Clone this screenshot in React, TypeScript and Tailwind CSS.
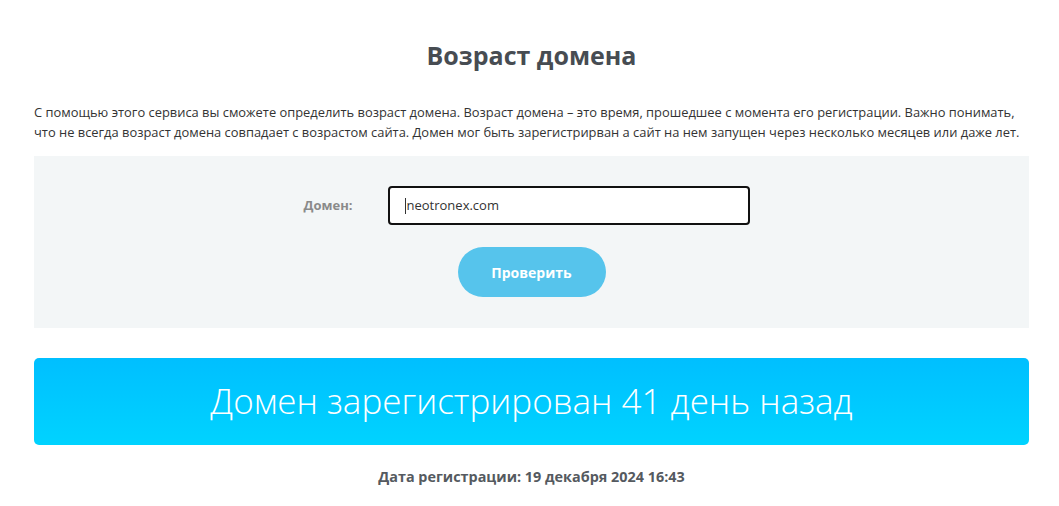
import React from "react";

export default function App() {
  return (
    <div className="min-h-[506px] bg-white pl-[34px] pr-[30px] pt-[38px] text-[#333]" style={{ fontFamily: '"Open Sans", "Noto Sans", sans-serif' }}>
      <h1 className="text-center text-[25px] font-bold leading-[34px] text-[#474c52]">Возраст домена</h1>
      <p className="mt-[30px] text-[12.9px] leading-[20px] text-[#333]">
        С помощью этого сервиса вы сможете определить возраст домена. Возраст домена – это время, прошедшее с момента его регистрации. Важно понимать,
        <br />
        что не всегда возраст домена совпадает с возрастом сайта. Домен мог быть зарегистрирван а сайт на нем запущен через несколько месяцев или даже лет.
      </p>
      <div className="mt-[14px] flex h-[172px] flex-col items-center bg-[#f3f6f7] pt-[30px]">
        <div className="mr-[10px] flex items-center">
          <label className="w-[84px] text-[13px] font-bold text-[#8a8a8a]">Домен:</label>
          <div className="flex h-[39px] w-[362px] items-center rounded-[4px] border-2 border-[#111] bg-white px-[15px] text-[13px] text-[#333]">
            <span className="mr-[1px] inline-block h-[16px] w-[1px] bg-[#333]" />
            <span>neotronex.com</span>
          </div>
        </div>
        <button className="mt-[22px] h-[50px] w-[148px] rounded-full bg-[#56c4ec] text-[14px] font-bold text-white">Проверить</button>
      </div>
      <div className="mt-[30px] flex h-[87px] items-center justify-center rounded-[5px] bg-gradient-to-b from-[#00bfff] to-[#00d3ff] text-[35px] font-light text-white">
        Домен зарегистрирован 41 день назад
      </div>
      <div className="mt-[21px] text-center text-[14.4px] font-bold text-[#555a60]">Дата регистрации: 19 декабря 2024 16:43</div>
    </div>
  );
}
